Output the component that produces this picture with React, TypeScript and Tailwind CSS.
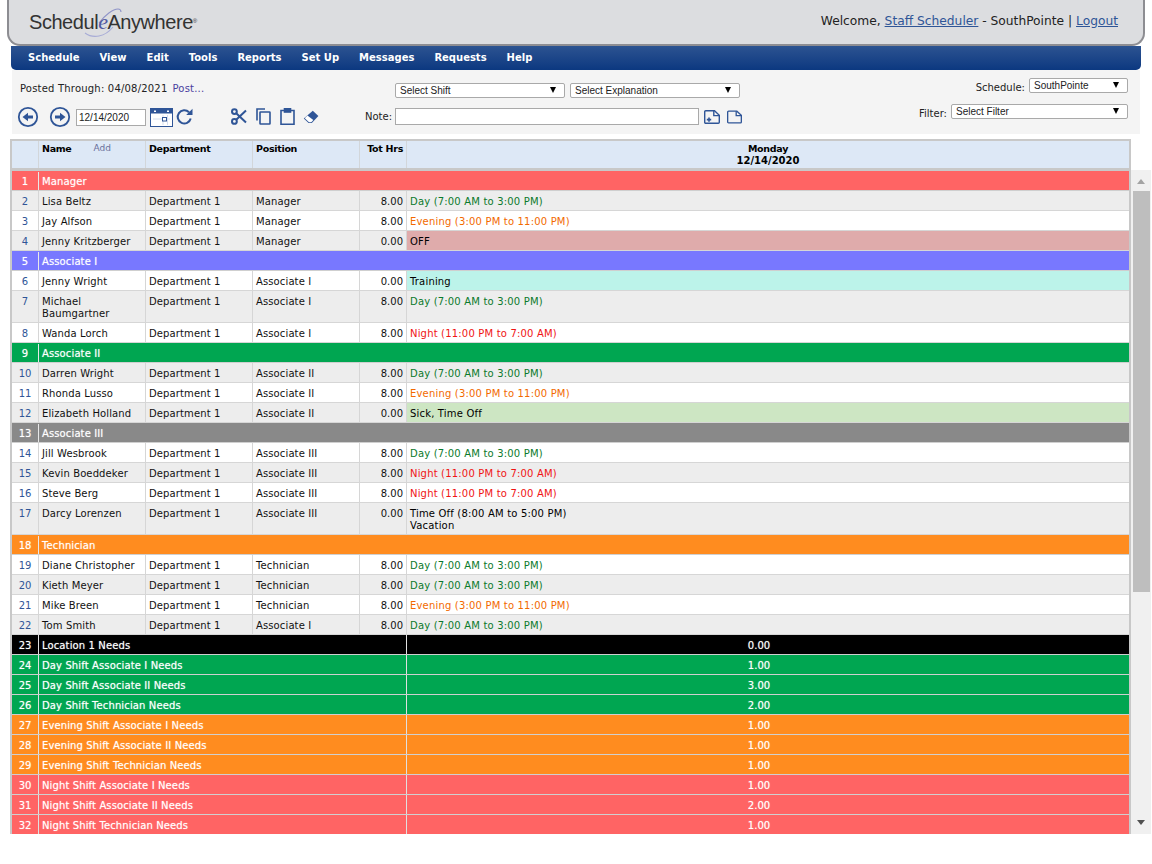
import React from 'react'

const FONT = "font-['DejaVu_Sans',Verdana,sans-serif]"

type Row = {
  n: number
  kind: 'group' | 'person' | 'total'
  name: string
  dept?: string
  pos?: string
  hrs?: string
  shift?: string
  shift2?: string
  color?: string
  tall?: boolean
  bg?: string
}

const DAY = 'Day (7:00 AM to 3:00 PM)'
const EVE = 'Evening (3:00 PM to 11:00 PM)'
const NIGHT = 'Night (11:00 PM to 7:00 AM)'
const GREEN = 'text-[#0b7a2b]'
const ORANGE = 'text-[#f26a00]'
const RED = 'text-[#f01414]'

const p = (n: number, name: string, pos: string, hrs: string, shift: string, color = 'text-black', extra: Partial<Row> = {}): Row => ({
  n, kind: 'person', name, dept: 'Department 1', pos, hrs, shift, color, ...extra,
})
const g = (n: number, name: string, bg: string): Row => ({ n, kind: 'group', name, bg })
const t = (n: number, name: string, hrs: string, bg: string): Row => ({ n, kind: 'total', name, hrs, bg })

const rows: Row[] = [
  g(1, 'Manager', 'bg-[#ff6464]'),
  p(2, 'Lisa Beltz', 'Manager', '8.00', DAY, GREEN),
  p(3, 'Jay Alfson', 'Manager', '8.00', EVE, ORANGE),
  p(4, 'Jenny Kritzberger', 'Manager', '0.00', 'OFF', 'text-black', { bg: 'bg-[#dfabab]' }),
  g(5, 'Associate I', 'bg-[#7878ff]'),
  p(6, 'Jenny Wright', 'Associate I', '0.00', 'Training', 'text-black', { bg: 'bg-[#bcf3ea]' }),
  p(7, 'Michael Baumgartner', 'Associate I', '8.00', DAY, GREEN, { tall: true }),
  p(8, 'Wanda Lorch', 'Associate I', '8.00', NIGHT, RED),
  g(9, 'Associate II', 'bg-[#00a651]'),
  p(10, 'Darren Wright', 'Associate II', '8.00', DAY, GREEN),
  p(11, 'Rhonda Lusso', 'Associate II', '8.00', EVE, ORANGE),
  p(12, 'Elizabeth Holland', 'Associate II', '0.00', 'Sick, Time Off', 'text-black', { bg: 'bg-[#cde6c3]' }),
  g(13, 'Associate III', 'bg-[#898989]'),
  p(14, 'Jill Wesbrook', 'Associate III', '8.00', DAY, GREEN),
  p(15, 'Kevin Boeddeker', 'Associate III', '8.00', NIGHT, RED),
  p(16, 'Steve Berg', 'Associate III', '8.00', NIGHT, RED),
  p(17, 'Darcy Lorenzen', 'Associate III', '0.00', 'Time Off (8:00 AM to 5:00 PM)', 'text-black', { tall: true, shift2: 'Vacation' }),
  g(18, 'Technician', 'bg-[#ff8c1f]'),
  p(19, 'Diane Christopher', 'Technician', '8.00', DAY, GREEN),
  p(20, 'Kieth Meyer', 'Technician', '8.00', DAY, GREEN),
  p(21, 'Mike Breen', 'Technician', '8.00', EVE, ORANGE),
  p(22, 'Tom Smith', 'Associate I', '8.00', DAY, GREEN),
  t(23, 'Location 1 Needs', '0.00', 'bg-black'),
  t(24, 'Day Shift Associate I Needs', '1.00', 'bg-[#00a651]'),
  t(25, 'Day Shift Associate II Needs', '3.00', 'bg-[#00a651]'),
  t(26, 'Day Shift Technician Needs', '2.00', 'bg-[#00a651]'),
  t(27, 'Evening Shift Associate I Needs', '1.00', 'bg-[#ff8c1f]'),
  t(28, 'Evening Shift Associate II Needs', '1.00', 'bg-[#ff8c1f]'),
  t(29, 'Evening Shift Technician Needs', '1.00', 'bg-[#ff8c1f]'),
  t(30, 'Night Shift Associate I Needs', '1.00', 'bg-[#ff6464]'),
  t(31, 'Night Shift Associate II Needs', '2.00', 'bg-[#ff6464]'),
  t(32, 'Night Shift Technician Needs', '1.00', 'bg-[#ff6464]'),
]

const menu = ['Schedule', 'View', 'Edit', 'Tools', 'Reports', 'Set Up', 'Messages', 'Requests', 'Help']

const GRID = 'grid grid-cols-[27px_107px_107px_107px_47px_722px]'
const WHITE_TEXT = 'text-white [text-shadow:0_0_1px_rgba(255,255,255,0.6)]'

const Select = ({ label, className }: { label: string; className: string }) => (
  <div className={`flex h-[15px] items-center justify-between rounded-[2px] border border-[#a9a9a9] bg-white pl-[4px] pr-[8px] text-[#222] ${className}`}>
    <span className="font-['Liberation_Sans',sans-serif] text-[10px]">{label}</span>
    <span className="mb-[2px] border-x-[3.5px] border-t-[6px] border-x-transparent border-t-black" />
  </div>
)

const ICON = '#2f5597'

const ArrowCircle = ({ dir }: { dir: 'l' | 'r' }) => (
  <svg width="22" height="22" viewBox="0 0 22 22" fill="none">
    <circle cx="11" cy="11" r="9.2" stroke={ICON} strokeWidth="1.8" />
    <path d={dir === 'l' ? 'M5.5 11 11 6.8v2.6h5v3.2h-5v2.6z' : 'M16.5 11 11 6.8v2.6H6v3.2h5v2.6z'} fill={ICON} />
  </svg>
)

const Calendar = () => (
  <svg width="23" height="19" viewBox="0 0 23 19" fill="none">
    <rect x="0.5" y="0.5" width="22" height="18" fill="#fff" stroke={ICON} />
    <rect x="1" y="1" width="21" height="4.5" fill={ICON} />
    <path d="M4 2.5h2v1.5H4zM17 2.5h2v1.5h-2z" fill="#fff" />
    <path d="M17.5 7v10M13 7v10M3 11h17" stroke="#d5deee" />
    <rect x="12.5" y="9.5" width="4" height="3.5" fill="#fff" stroke={ICON} />
  </svg>
)

const Refresh = () => (
  <svg width="18" height="18" viewBox="0 0 18 18" fill="none">
    <path d="M14.7 10.5A6.6 6.6 0 1 1 13 4.2" stroke={ICON} strokeWidth="2" />
    <path d="M10.2 7h6.3V.8z" fill={ICON} />
  </svg>
)

const Scissors = () => (
  <svg width="16" height="17" viewBox="0 0 16 17" fill="none" stroke={ICON} strokeWidth="2">
    <circle cx="3.4" cy="3.6" r="2.4" />
    <circle cx="3.4" cy="13.4" r="2.4" />
    <path d="M5.2 5.2 15 14.5M5.2 11.8 15 2.5" />
  </svg>
)

const Copy = () => (
  <svg width="15" height="17" viewBox="0 0 15 17" fill="none" stroke={ICON} strokeWidth="1.6">
    <path d="M1 12.5V1h8" />
    <rect x="4" y="4" width="10" height="12" rx="0.5" />
  </svg>
)

const Clip = () => (
  <svg width="15" height="17" viewBox="0 0 15 17" fill="none" stroke={ICON} strokeWidth="1.6">
    <path d="M4.5 2.5H1v13.7h13V2.5h-3.5" />
    <rect x="4.5" y="0.8" width="6" height="3.2" fill={ICON} />
  </svg>
)

const Eraser = () => (
  <svg width="16" height="14" viewBox="0 0 16 14" fill="none">
    <path d="M9.8.8 15.4 6l-6.6 6.9H5.6L.8 8.4z" fill={ICON} />
    <path d="M4.4 5.4 1.8 8.3l4.2 3.9h2.3l2-2.1z" fill="#fff" />
  </svg>
)

const FileIcon = ({ plus }: { plus?: boolean }) => (
  <svg width={plus ? 16 : 15} height="14" viewBox="0 0 16 14" fill="none" stroke={ICON} strokeWidth="1.4">
    <path d="M1.7.8h8.8l4.8 4.4v7a1 1 0 0 1-1 1H1.7a1 1 0 0 1-1-1V1.8a1 1 0 0 1 1-1z" />
    <path d="M9.8.8v4.8h5.5" />
    {plus && <path d="M2.8 9.6h4.4M5 7.4v4.4" strokeWidth="1.6" />}
  </svg>
)

const Logo = () => (
  <div className="relative flex h-[30px] w-[175px] items-end pb-[4px] font-['Liberation_Sans',sans-serif] text-[20px] leading-[22px] tracking-[-0.45px] text-[#333]">
    <svg className="absolute left-[54px] top-0" width="60" height="35" viewBox="0 0 60 35" fill="none">
      <path d="M16 16C22 8 30 2 35 2c2 0 3 1 3 3" stroke="#8f94c8" strokeWidth="1.1" />
      <path d="M2 26C10 32 22 30 30 20" stroke="#a7abd6" strokeWidth="1.1" />
    </svg>
    <span className="relative">Schedul</span>
    <span className="relative font-['Liberation_Serif',serif] text-[22px] italic text-[#5158a0]">e</span>
    <span className="relative">Anywhere</span>
    <span className="relative mb-[9px] text-[6px] leading-none tracking-normal">®</span>
  </div>
)

const Label = ({ children, className = '' }: { children: React.ReactNode; className?: string }) => (
  <span className={`text-[10px] text-[#222] ${className}`}>{children}</span>
)

const Header = () => (
  <div className="flex h-[46px] items-center justify-between rounded-b-[13px] border-x-2 border-b-2 border-[#8d8d92] bg-[#dcdde0] pl-[20px] pr-[25px]">
    <Logo />
    <div className="mb-[2px] text-[12.25px] text-[#222]">
      Welcome, <a className="text-[#2f5597] underline">Staff Scheduler</a> - SouthPointe | <a className="text-[#2f5597] underline">Logout</a>
    </div>
  </div>
)

const Nav = () => (
  <div className="mx-[4px] flex h-[24px] items-center gap-[20px] rounded-b-[5px] bg-gradient-to-b from-[#2c5391] to-[#0b3880] pb-[2px] pl-[17px] text-[10px] font-bold text-white">
    {menu.map(m => (
      <span key={m}>{m}</span>
    ))}
  </div>
)

const Toolbar = () => (
  <div className="mx-[5px] flex h-[64px] bg-[#f4f4f4]">
    <div className="w-[211px] pl-[8px] pt-[12px]">
      <div className="flex h-[12px] items-center">
        <Label className="tracking-[0.2px]">Posted Through: 04/08/2021</Label>
        <span className="ml-[5px] text-[10px] tracking-[0.2px] text-[#4a3f9f]">Post...</span>
      </div>
      <div className="mt-[12px] flex items-center">
        <span className="ml-[-3px]"><ArrowCircle dir="l" /></span>
        <span className="ml-[10px]"><ArrowCircle dir="r" /></span>
        <div className="ml-[5px] flex h-[17px] w-[70px] items-center border border-[#a9a9a9] bg-white pl-[2px] font-['Liberation_Sans',sans-serif] text-[10px] text-[#222]">12/14/2020</div>
        <span className="ml-[4px]"><Calendar /></span>
        <span className="ml-[3px]"><Refresh /></span>
      </div>
    </div>
    <div className="flex w-[130px] items-end gap-[9px] pb-[9px] pl-[8px]">
      <Scissors />
      <Copy />
      <Clip />
      <span className="ml-[-1px] mb-[1px]"><Eraser /></span>
    </div>
    <div className="ml-[12px] flex w-[380px] flex-col pt-[13px]">
      <div className="flex gap-[5px] pl-[30px]">
        <Select label="Select Shift" className="w-[170px]" />
        <Select label="Select Explanation" className="w-[170px]" />
      </div>
      <div className="mt-[10px] flex items-center">
        <Label className="w-[30px]">Note:</Label>
        <div className="h-[17px] w-[304px] border border-[#a9a9a9] bg-white" />
        <span className="ml-[5px]"><FileIcon plus /></span>
        <span className="ml-[7px]"><FileIcon /></span>
      </div>
    </div>
    <div className="flex flex-1 flex-col items-end pr-[12px] pt-[8px]">
      <div className="flex h-[15px] items-center gap-[4px]">
        <Label className="h-[15px] leading-[19px]">Schedule:</Label>
        <Select label="SouthPointe" className="w-[99px]" />
      </div>
      <div className="mt-[11px] flex h-[15px] items-center gap-[4px]">
        <Label className="h-[15px] leading-[19px]">Filter:</Label>
        <Select label="Select Filter" className="w-[177px]" />
      </div>
    </div>
  </div>
)

const ColHead = () => (
  <div className={`${GRID} h-[30px] border-b-[3px] border-[#c8c8c8] bg-[#dde8f6] text-[9.5px] font-bold tracking-[-0.3px] text-black`}>
    <div className="border-r border-[#d2d6da]" />
    <div className="flex border-r border-[#d2d6da] pl-[3px] pt-[1px]">
      Name
      <span className="ml-[22px] text-[9px] font-normal tracking-normal text-[#6a6f9b]">Add</span>
    </div>
    <div className="border-r border-[#d2d6da] pl-[3px] pt-[1px]">Department</div>
    <div className="border-r border-[#d2d6da] pl-[3px] pt-[1px]">Position</div>
    <div className="border-r border-[#d2d6da] pr-[3px] pt-[1px] text-right">Tot Hrs</div>
    <div className="pt-[2px] text-center leading-[12px]">
      Monday
      <br />
      <span className="text-[10px] tracking-normal">12/14/2020</span>
    </div>
  </div>
)

const TableRow = ({ row, gray }: { row: Row; gray: boolean }) => {
  if (row.kind === 'group') {
    return (
      <div className={`flex h-[20px] items-center border-b border-[#cfcfcf] pt-[1px] ${WHITE_TEXT} ${row.bg}`}>
        <div className="flex h-full w-[27px] items-center justify-center border-r border-[#e8e8e8]">{row.n}</div>
        <div className="pl-[3px] tracking-[0.12px]">{row.name}</div>
      </div>
    )
  }
  if (row.kind === 'total') {
    return (
      <div className={`${GRID} h-[20px] border-b border-[#cfcfcf] ${WHITE_TEXT} ${row.bg}`}>
        <div className="flex items-center justify-center border-r border-[#e0e0e0] pt-[1px]">{row.n}</div>
        <div className="col-span-4 flex items-center border-r border-[#e0e0e0] pl-[3px] pt-[1px] tracking-[0.12px]">{row.name}</div>
        <div className="flex items-center justify-center pr-[18px] pt-[1px]">{row.hrs}</div>
      </div>
    )
  }
  const stripe = gray ? 'bg-[#ededed]' : 'bg-white'
  const h = row.tall ? 'h-[32px]' : 'h-[20px]'
  const cell = 'flex items-start border-r border-[#d6d6d6] pl-[3px] pt-[5px] leading-[12px] tracking-[0.12px]'
  return (
    <div className={`${GRID} ${h} ${stripe} border-b border-[#d6d6d6] text-[#111]`}>
      <div className="flex items-start justify-center border-r border-[#d6d6d6] pt-[5px] leading-[12px] text-[#2f5597]">{row.n}</div>
      <div className={cell}>{row.name}</div>
      <div className={cell}>{row.dept}</div>
      <div className={cell}>{row.pos}</div>
      <div className="flex items-start justify-end border-r border-[#d6d6d6] pr-[3px] pt-[5px] leading-[12px]">{row.hrs}</div>
      <div className={`pl-[3px] pt-[5px] leading-[12px] tracking-[0.18px] ${row.color} ${row.bg ?? ''}`}>
        {row.shift}
        {row.shift2 && <div>{row.shift2}</div>}
      </div>
    </div>
  )
}

const Scrollbar = () => (
  <div className="flex h-[664px] w-[20px] flex-col items-center bg-[#f0f0f0]">
    <div className="mt-[9px] border-x-[4.5px] border-b-[5px] border-x-transparent border-b-[#a3a3a3]" />
    <div className="mt-[7px] h-[401px] w-[17px] bg-[#bebebe]" />
    <div className="mb-[9px] mt-auto border-x-[4.5px] border-t-[5px] border-x-transparent border-t-[#505050]" />
  </div>
)

export default function App() {
  let persons = 0
  return (
    <div className={`h-[864px] w-[1152px] overflow-hidden bg-white ${FONT}`}>
      <div className="ml-[7px] w-[1138px]">
        <Header />
        <Nav />
        <Toolbar />
      </div>
      <div className="ml-[10px] mt-[5px] flex">
        <div className="w-[1121px] border-x-2 border-t-2 border-[#c8c8c8] text-[10px]">
          <ColHead />
          <div className="h-[663px] overflow-hidden">
            {rows.map(r => {
              const gray = r.kind === 'person' && persons++ % 2 === 0
              return <TableRow key={r.n} row={r} gray={gray} />
            })}
          </div>
        </div>
        <div className="mt-[31px]"><Scrollbar /></div>
      </div>
    </div>
  )
}
